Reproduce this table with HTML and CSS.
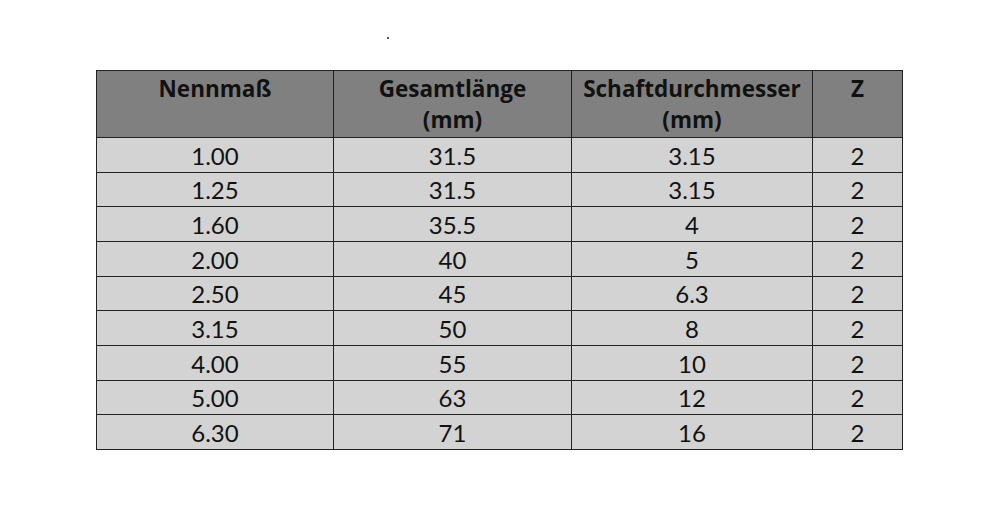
FILE: index.html
```html
<!DOCTYPE html>
<html lang="de">
<head>
<meta charset="utf-8">
<title>Tabelle</title>
<link rel="stylesheet" href="styles.css">
</head>
<body>
<div class="page">
  <div class="dot"></div>
  <table class="spec">
    <colgroup>
      <col class="c1"><col class="c2"><col class="c3"><col class="c4">
    </colgroup>
    <thead>
      <tr>
        <th>Nennmaß</th>
        <th>Gesamtlänge<br>(mm)</th>
        <th>Schaftdurchmesser<br>(mm)</th>
        <th>Z</th>
      </tr>
    </thead>
    <tbody>
      <tr><td>1.00</td><td>31.5</td><td>3.15</td><td>2</td></tr>
      <tr><td>1.25</td><td>31.5</td><td>3.15</td><td>2</td></tr>
      <tr><td>1.60</td><td>35.5</td><td>4</td><td>2</td></tr>
      <tr><td>2.00</td><td>40</td><td>5</td><td>2</td></tr>
      <tr><td>2.50</td><td>45</td><td>6.3</td><td>2</td></tr>
      <tr><td>3.15</td><td>50</td><td>8</td><td>2</td></tr>
      <tr><td>4.00</td><td>55</td><td>10</td><td>2</td></tr>
      <tr><td>5.00</td><td>63</td><td>12</td><td>2</td></tr>
      <tr><td>6.30</td><td>71</td><td>16</td><td>2</td></tr>
    </tbody>
  </table>
</div>
</body>
</html>
```
FILE: styles.css
```css
html, body {
  margin: 0;
  padding: 0;
  background: #ffffff;
}
.page {
  width: 1000px;
  height: 527px;
  overflow: hidden;
}
.dot {
  width: 2px;
  height: 2px;
  background: #555;
  margin: 37px 0 0 387px;
}
.spec {
  margin: 31px 0 0 96px;
  border-collapse: collapse;
  table-layout: fixed;
  width: 807px;
  font-family: Lato, "Open Sans", sans-serif;
  color: #111;
}
.c1 { width: 237px; }
.c2 { width: 238px; }
.c3 { width: 241px; }
.c4 { width: 90px; }
.spec th,
.spec td {
  border: 1px solid #222;
  text-align: center;
  padding: 0;
}
.spec th {
  background: #808080;
  font-family: "Open Sans", Lato, sans-serif;
  font-weight: 700;
  font-size: 22.5px;
  line-height: 31px;
  vertical-align: top;
  height: 67px;
  padding-top: 2px;
  box-sizing: border-box;
}
.spec td {
  background: #d3d3d3;
  font-size: 24px;
  line-height: 30px;
  height: 34.67px;
  vertical-align: middle;
  padding-top: 2px;
  box-sizing: border-box;
}
```
